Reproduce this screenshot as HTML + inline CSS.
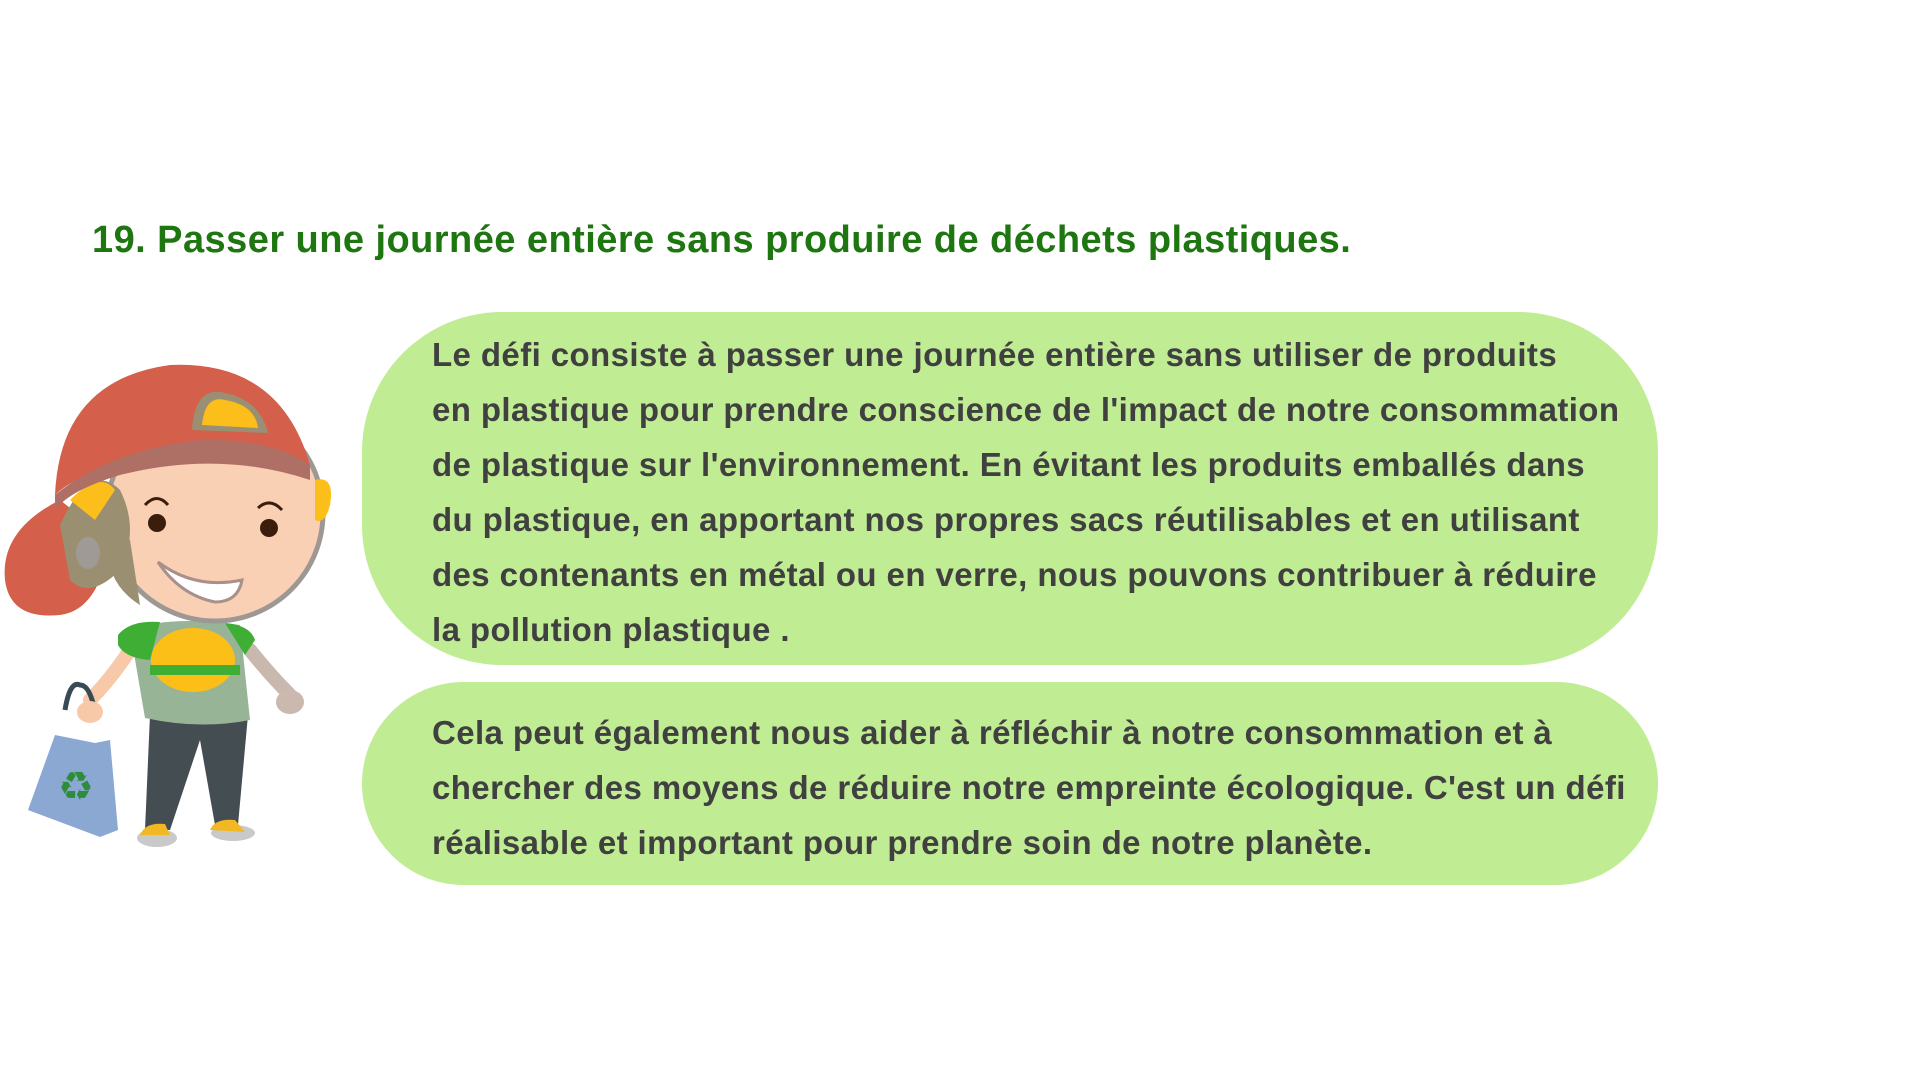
<!DOCTYPE html>
<html><head><meta charset="utf-8"><style>
html,body{margin:0;padding:0;background:#fff;width:1920px;height:1080px;overflow:hidden;position:relative;font-family:"Liberation Sans",sans-serif}
.title{position:absolute;left:92px;top:219px;font-size:38px;font-weight:bold;color:#1d760f;white-space:nowrap;letter-spacing:0.45px}
.bub{position:absolute;background:#c0ec94;border-radius:140px}
.t{position:absolute;left:432px;font-size:33px;font-weight:bold;color:#404040;white-space:nowrap;line-height:55px;letter-spacing:0.4px}
</style></head><body>
<div class="title">19. Passer une journée entière sans produire de déchets plastiques.</div>
<div class="bub" style="left:362px;top:312px;width:1296px;height:353px"></div>
<div class="bub" style="left:362px;top:682px;width:1296px;height:203px;border-radius:102px"></div>
<div class="t" style="top:327px">Le défi consiste à passer une journée entière sans utiliser de produits<br>en plastique pour prendre conscience de l'impact de notre consommation<br>de plastique sur l'environnement. En évitant les produits emballés dans<br>du plastique, en apportant nos propres sacs réutilisables et en utilisant<br>des contenants en métal ou en verre, nous pouvons contribuer à réduire<br>la pollution plastique .</div>
<div class="t" style="top:705px">Cela peut également nous aider à réfléchir à notre consommation et à<br>chercher des moyens de réduire notre empreinte écologique. C'est un défi<br>réalisable et important pour prendre soin de notre planète.</div>
<svg style="position:absolute;left:0;top:340px" width="360" height="520" viewBox="0 0 360 520">
<path d="M150 375 L145 490 L170 490 L200 400 L215 485 L238 485 L248 375 Z" fill="#444d52"/>
<ellipse cx="157" cy="498" rx="20" ry="9" fill="#c9c9c9"/><path d="M140 495 Q145 482 165 484 L170 495 Z" fill="#f2b824"/>
<ellipse cx="233" cy="493" rx="22" ry="8" fill="#c9c9c9"/><path d="M210 490 Q215 478 235 480 L245 492 Z" fill="#f2b824"/>
<path d="M130 310 Q110 340 90 360" stroke="#f7c9a8" stroke-width="14" fill="none" stroke-linecap="round"/>
<path d="M250 310 Q270 335 290 355" stroke="#c9b8ad" stroke-width="14" fill="none" stroke-linecap="round"/>
<ellipse cx="290" cy="362" rx="14" ry="12" fill="#cbb9b0"/>
<path d="M130 290 Q170 275 240 285 L250 380 Q200 390 145 378 Z" fill="#98b497"/>
<path d="M118 295 Q130 280 160 282 L150 320 Q125 318 118 305 Z" fill="#3fae35"/>
<path d="M225 283 Q250 285 255 300 L245 315 Z" fill="#3fae35"/>
<ellipse cx="193" cy="320" rx="42" ry="32" fill="#fbbf18"/>
<rect x="150" y="325" width="90" height="10" fill="#3fae35"/>
<path d="M65 370 Q70 340 80 345 Q90 345 95 372" stroke="#3a4a55" stroke-width="5" fill="none"/>
<path d="M55 395 L95 403 L110 400 L118 490 L100 497 L28 470 Z" fill="#8aa8d2"/>
<text x="58" y="460" font-size="40" fill="#2d8d3a" font-family="DejaVu Sans">♻</text>
<ellipse cx="90" cy="372" rx="13" ry="11" fill="#f7c9a8"/>
<path d="M60 160 Q0 190 5 240 Q10 280 60 275 Q100 270 110 200 Z" fill="#d45f4a"/>
<circle cx="215" cy="173" r="108" fill="#f9d0b4" stroke="#9e9895" stroke-width="5"/>
<path d="M110 190 Q100 240 140 265 L130 200 Z" fill="#9b8f72"/>
<path d="M60 185 Q90 120 120 150 Q140 190 120 230 Q90 260 70 240 Z" fill="#9b8f72"/>
<path d="M70 160 Q100 130 115 150 L95 180 Z" fill="#fbbe1a"/>
<ellipse cx="88" cy="213" rx="12" ry="16" fill="#a09a97"/>
<path d="M315 140 Q335 135 330 165 Q325 185 315 180 Z" fill="#fbbe1a"/>
<path d="M55 155 Q60 40 170 25 Q280 20 310 125 Q220 95 110 125 Q70 140 55 155 Z" fill="#d45f4a"/>
<path d="M55 155 Q110 110 200 100 Q270 98 310 125 L310 140 Q220 110 120 135 Q70 150 55 170 Z" fill="#ae7065"/>
<path d="M192 90 Q195 45 225 53 Q260 60 268 93 Z" fill="#9a8f73"/>
<path d="M202 85 Q205 55 225 60 Q255 65 258 88 Z" fill="#fbbe1a"/>
<circle cx="157" cy="183" r="9" fill="#3b1d0e"/><circle cx="269" cy="188" r="9" fill="#3b1d0e"/>
<path d="M145 165 Q157 152 168 165" stroke="#3b1d0e" stroke-width="3" fill="none"/>
<path d="M258 168 Q270 157 282 170" stroke="#3b1d0e" stroke-width="3" fill="none"/>
<path d="M158 222 Q195 250 242 240 Q238 262 215 262 Q180 255 158 222 Z" fill="#fff" stroke="#a9908a" stroke-width="3"/>
</svg>
</body></html>
